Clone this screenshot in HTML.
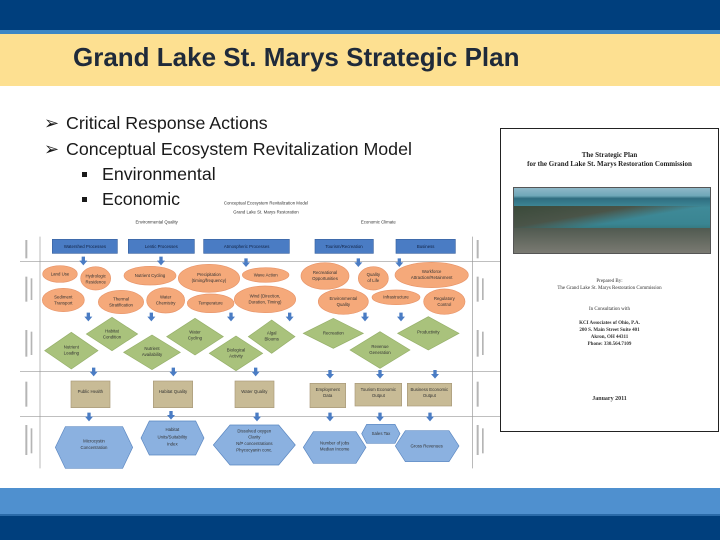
<!DOCTYPE html>
<html><head><meta charset="utf-8"><style>
body{margin:0;width:720px;height:540px;overflow:hidden;background:#fff;font-family:"Liberation Sans",sans-serif;position:relative}
.a{position:absolute}
.bl{font-size:17.8px;color:#1a1a1a}
</style></head><body>
<div class="a" style="left:0;top:0;width:720px;height:30px;background:#003f7d"></div>
<div class="a" style="left:0;top:30px;width:720px;height:4px;background:#3c86c4"></div>
<div class="a" style="left:0;top:34px;width:720px;height:52px;background:#fde091"></div>
<div class="a" style="left:73px;top:42px;font-size:26px;font-weight:bold;color:#1f2a3a;">Grand Lake St. Marys Strategic Plan</div>

<div class="a bl" style="left:44px;top:113px">➢</div><div class="a bl" style="left:66px;top:113px">Critical Response Actions</div>
<div class="a bl" style="left:44px;top:139px">➢</div><div class="a bl" style="left:66px;top:139px">Conceptual Ecosystem Revitalization Model</div>
<div class="a" style="left:82px;top:172px;width:5px;height:5px;background:#1a1a1a"></div><div class="a bl" style="left:102px;top:164px">Environmental</div>
<div class="a" style="left:82px;top:197px;width:5px;height:5px;background:#1a1a1a"></div><div class="a bl" style="left:102px;top:189px">Economic</div>

<svg class="a" style="left:0;top:190px" width="500" height="290" viewBox="0 0 1500 870">
<g font-family="Liberation Sans" fill="#333" font-size="13" text-anchor="middle">
<text x="798" y="43">Conceptual Ecosystem Revitalization Model</text>
<text x="798" y="71">Grand Lake St. Marys Restoration</text>
<text x="470" y="100">Environmental Quality</text>
<text x="1135" y="100">Economic Climate</text>
</g>
<g fill="#b5b5b5">
<rect x="76" y="150" width="6" height="55"/><rect x="76" y="260" width="6" height="75"/><rect x="92" y="265" width="5" height="65"/><rect x="76" y="420" width="6" height="80"/><rect x="92" y="425" width="5" height="70"/><rect x="76" y="575" width="6" height="75"/><rect x="76" y="705" width="6" height="90"/><rect x="92" y="715" width="5" height="75"/>
<rect x="1430" y="150" width="6" height="55"/><rect x="1430" y="260" width="6" height="75"/><rect x="1446" y="265" width="5" height="65"/><rect x="1430" y="420" width="6" height="80"/><rect x="1446" y="425" width="5" height="70"/><rect x="1430" y="575" width="6" height="75"/><rect x="1430" y="705" width="6" height="90"/><rect x="1446" y="715" width="5" height="75"/>
</g>
<g stroke="#999" stroke-width="2">
<line x1="120" y1="140" x2="120" y2="835"/><line x1="1418" y1="140" x2="1418" y2="835"/>
<line x1="60" y1="215" x2="1500" y2="215"/><line x1="60" y1="545" x2="1500" y2="545"/><line x1="60" y1="680" x2="1500" y2="680"/>
</g>
<g fill="#4a7cc4" stroke="#3a63a0" stroke-width="2">
<rect x="157" y="148" width="195" height="42"/><rect x="385" y="148" width="198" height="42"/><rect x="611" y="148" width="257" height="42"/><rect x="945" y="148" width="175" height="42"/><rect x="1188" y="148" width="178" height="42"/>
</g>
<g fill="#f5a97a" stroke="#e8956a" stroke-width="2">
<ellipse cx="180" cy="252" rx="52" ry="25"/><ellipse cx="287" cy="265" rx="45" ry="35"/><ellipse cx="450" cy="257" rx="78" ry="28"/><ellipse cx="627" cy="265" rx="92" ry="42"/><ellipse cx="797" cy="255" rx="70" ry="22"/><ellipse cx="190" cy="330" rx="63" ry="35"/><ellipse cx="363" cy="336" rx="68" ry="35"/><ellipse cx="497" cy="331" rx="57" ry="38"/><ellipse cx="632" cy="340" rx="70" ry="28"/><ellipse cx="795" cy="328" rx="92" ry="40"/><ellipse cx="975" cy="258" rx="72" ry="40"/><ellipse cx="1120" cy="265" rx="45" ry="35"/><ellipse cx="1295" cy="255" rx="110" ry="38"/><ellipse cx="1030" cy="335" rx="75" ry="38"/><ellipse cx="1188" cy="322" rx="72" ry="22"/><ellipse cx="1333" cy="335" rx="62" ry="38"/>
</g>
<g fill="#a9c27c" stroke="#96b06a" stroke-width="2">
<path d="M134 482 L214 427 L294 482 L214 537Z"/><path d="M259 432 L336 382 L413 432 L336 482Z"/><path d="M371 487 L456 435 L541 487 L456 539Z"/><path d="M500 440 L585 385 L670 440 L585 495Z"/><path d="M628 490 L708 438 L788 490 L708 542Z"/><path d="M745 440 L815 390 L885 440 L815 490Z"/><path d="M910 430 L1000 385 L1090 430 L1000 475Z"/><path d="M1050 480 L1140 425 L1230 480 L1140 535Z"/><path d="M1193 430 L1285 380 L1377 430 L1285 480Z"/>
</g>
<g fill="#c8bb96" stroke="#a8997a" stroke-width="2">
<rect x="213" y="573" width="117" height="80"/><rect x="460" y="573" width="118" height="80"/><rect x="705" y="573" width="117" height="80"/><rect x="930" y="580" width="107" height="73"/><rect x="1065" y="580" width="140" height="68"/><rect x="1222" y="580" width="133" height="68"/>
</g>
<g fill="#8bb1e0" stroke="#5a86c0" stroke-width="2">
<path d="M166 772 L196 710 L368 710 L398 772 L368 835 L196 835Z"/><path d="M423 744 L448 693 L587 693 L612 744 L587 795 L448 795Z"/><path d="M640 765 L690 705 L836 705 L886 765 L836 825 L690 825Z"/><path d="M910 772 L940 725 L1068 725 L1098 772 L1068 820 L940 820Z"/><path d="M1085 731 L1100 703 L1185 703 L1200 731 L1185 760 L1100 760Z"/><path d="M1186 768 L1216 722 L1347 722 L1377 768 L1347 815 L1216 815Z"/>
</g>
<g fill="#4a7cc4">
<path d="M245 200h10v12h7l-12 14-12-14h7z"/><path d="M478 200h10v12h7l-12 14-12-14h7z"/><path d="M733 205h10v12h7l-12 14-12-14h7z"/><path d="M1070 205h10v12h7l-12 14-12-14h7z"/><path d="M1193 205h10v12h7l-12 14-12-14h7z"/>
<path d="M260 368h10v12h7l-12 14-12-14h7z"/><path d="M449 368h10v12h7l-12 14-12-14h7z"/><path d="M688 368h10v12h7l-12 14-12-14h7z"/><path d="M864 368h10v12h7l-12 14-12-14h7z"/><path d="M1090 368h10v12h7l-12 14-12-14h7z"/><path d="M1198 368h10v12h7l-12 14-12-14h7z"/>
<path d="M276 533h10v12h7l-12 14-12-14h7z"/><path d="M515 533h10v12h7l-12 14-12-14h7z"/><path d="M762 533h10v12h7l-12 14-12-14h7z"/><path d="M985 540h10v12h7l-12 14-12-14h7z"/><path d="M1135 540h10v12h7l-12 14-12-14h7z"/><path d="M1300 540h10v12h7l-12 14-12-14h7z"/>
<path d="M262 668h10v12h7l-12 14-12-14h7z"/><path d="M508 663h10v12h7l-12 14-12-14h7z"/><path d="M766 668h10v12h7l-12 14-12-14h7z"/><path d="M985 668h10v12h7l-12 14-12-14h7z"/><path d="M1135 668h10v12h7l-12 14-12-14h7z"/><path d="M1285 668h10v12h7l-12 14-12-14h7z"/>
</g>
<g font-family="Liberation Sans" font-size="13" fill="#333" text-anchor="middle">
<text x="255" y="174" fill="#102040">Watershed Processes</text><text x="484" y="174" fill="#102040">Lentic Processes</text><text x="740" y="174" fill="#102040">Atmospheric Processes</text><text x="1032" y="174" fill="#102040">Tourism/Recreation</text><text x="1277" y="174" fill="#102040">Business</text>
<text x="180" y="256">Land Use</text><text x="287" y="262">Hydrologic</text><text x="287" y="280">Residence</text><text x="450" y="261">Nutrient Cycling</text><text x="627" y="258">Precipitation</text><text x="627" y="276">(timing/frequency)</text><text x="797" y="259">Wave Action</text>
<text x="190" y="325">Sediment</text><text x="190" y="343">Transport</text><text x="363" y="331">Thermal</text><text x="363" y="349">Stratification</text><text x="497" y="326">Water</text><text x="497" y="344">Chemistry</text><text x="632" y="344">Temperature</text><text x="795" y="322">Wind (Direction,</text><text x="795" y="340">Duration, Timing)</text>
<text x="975" y="252">Recreational</text><text x="975" y="270">Opportunities</text><text x="1120" y="258">Quality</text><text x="1120" y="276">of Life</text><text x="1295" y="249">Workforce</text><text x="1295" y="267">Attraction/Retainment</text><text x="1030" y="330">Environmental</text><text x="1030" y="348">Quality</text><text x="1188" y="326">Infrastructure</text><text x="1333" y="330">Regulatory</text><text x="1333" y="348">Control</text>
<text x="214" y="475">Nutrient</text><text x="214" y="493">Loading</text><text x="336" y="428">Habitat</text><text x="336" y="446">Condition</text><text x="456" y="480">Nutrient</text><text x="456" y="498">Availability</text><text x="585" y="430">Water</text><text x="585" y="448">Cycling</text><text x="708" y="484">Biological</text><text x="708" y="502">Activity</text><text x="815" y="433">Algal</text><text x="815" y="451">Blooms</text>
<text x="1000" y="434">Recreation</text><text x="1140" y="474">Revenue</text><text x="1140" y="492">Generation</text><text x="1285" y="430">Productivity</text>
<text x="271" y="609">Public Health</text><text x="519" y="609">Habitat Quality</text><text x="763" y="609">Water Quality</text><text x="983" y="603">Employment</text><text x="983" y="621">Data</text><text x="1135" y="603">Tourism Economic</text><text x="1135" y="621">Output</text><text x="1288" y="603">Business Economic</text><text x="1288" y="621">Output</text>
<text x="282" y="757">Microcystin</text><text x="282" y="777">Concentration</text><text x="517" y="723">Habitat</text><text x="517" y="745">Units/Suitability</text><text x="517" y="767">Index</text><text x="763" y="727">Dissolved oxygen</text><text x="763" y="746">Clarity</text><text x="763" y="765">N/P concentrations</text><text x="763" y="784">Phycocyanin conc.</text><text x="1004" y="764">Number of jobs</text><text x="1004" y="782">Median Income</text><text x="1143" y="735">Sales Tax</text><text x="1280" y="773">Gross Revenues</text>
</g>
</svg>

<div class="a" style="left:500px;top:128px;width:217px;height:302px;border:1px solid #222;background:#fff"></div>
<div class="a" style="left:501px;top:151px;width:217px;text-align:center;font-family:'Liberation Serif',serif;font-size:7px;font-weight:bold;color:#222;line-height:9px">The Strategic Plan<br>for the Grand Lake St. Marys Restoration Commission</div>
<div class="a" style="left:513px;top:187px;width:196px;height:65px;background:linear-gradient(180deg,#8fb8c8 0%,#6ea7b8 12%,#2f6d80 16%,#3f8a98 30%,#3a8592 55%,#2f6e70 70%,#3c4a40 85%,#6a6a60 100%);border:1px solid #555;overflow:hidden">
<div style="position:absolute;left:0;top:18px;width:196px;height:50px;background:linear-gradient(170deg,#3a4a3a 0%,#4a5448 25%,transparent 40%)"></div>
<div style="position:absolute;left:0;top:40px;width:196px;height:25px;background:linear-gradient(180deg,#505a50,#7a7a72)"></div>
</div>
<div class="a" style="left:501px;top:278px;width:217px;text-align:center;font-family:'Liberation Serif',serif;font-size:5px;color:#333;line-height:7px">Prepared By:<br>The Grand Lake St. Marys Restoration Commission<br><br><br>In Consultation with<br><br><b>KCI Associates of Ohio, P.A.<br>200 S. Main Street Suite 401<br>Akron, OH 44311<br>Phone: 330.564.7109</b></div>
<div class="a" style="left:501px;top:396px;width:217px;text-align:center;font-family:'Liberation Serif',serif;font-size:6px;font-weight:bold;color:#333">January 2011</div>

<div class="a" style="left:0;top:488px;width:720px;height:26px;background:#4f90cf"></div>
<div class="a" style="left:0;top:514px;width:720px;height:2px;background:#2a6aa8"></div>
<div class="a" style="left:0;top:516px;width:720px;height:24px;background:#003f7d"></div>
</body></html>
